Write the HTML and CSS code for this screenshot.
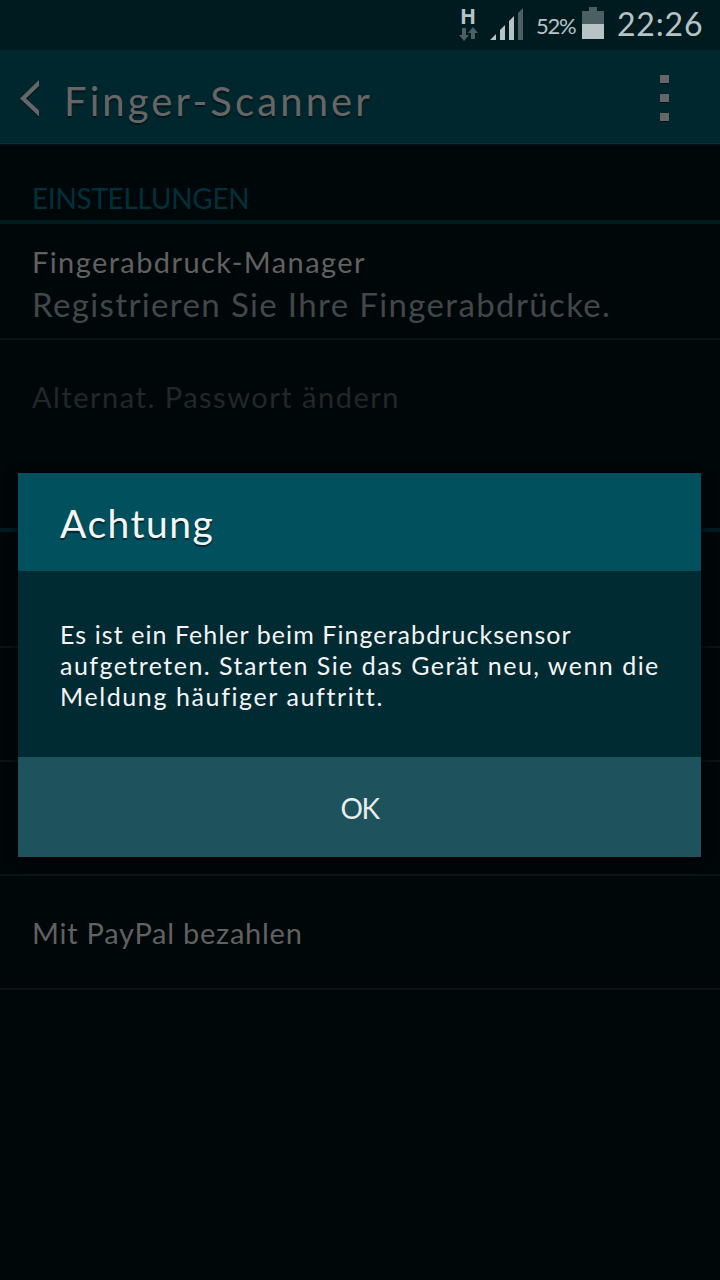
FILE: index.html
```html
<!DOCTYPE html>
<html lang="de">
<head>
<meta charset="utf-8">
<title>Finger-Scanner</title>
<link rel="stylesheet" href="styles.css">
</head>
<body>
<div class="screen">
  <div class="statusbar">
    <div class="network">
      <span class="network-type">H</span>
      <svg class="arrows" width="19" height="14" viewBox="0 0 19 14"><path d="M3 1h4v7h3l-5 6-5-6h3zM12 12V6H9l5-6 5 6h-3v6z" fill="#4c5f63"/></svg>
    </div>
    <svg class="signal" width="34" height="32" viewBox="0 0 34 32"><path d="M0 32l6-6v6zM10 32V22l5-5v15zM19 32V13l5-5v24z" fill="#b8c3c6"/><path d="M28 32V5l5-5v32z" fill="#4c5f63"/></svg>
    <span class="percent">52%</span>
    <svg class="battery" width="22" height="32" viewBox="0 0 22 32"><path d="M7 0h8v4h7v13H0V4h7z" fill="#4c5f63"/><path d="M0 17h22v15H0z" fill="#b8c3c6"/></svg>
    <span class="clock">22:26</span>
  </div>
  <header class="appbar">
    <svg class="back" width="22" height="39" viewBox="0 0 22 39"><path d="M20 2v6L7 20l13 12v6L1 20z" fill="#00181c"/><path d="M20 0v6L7 18.500l13 12v6L1 18.500z" fill="#666"/></svg>
    <h1 class="title">Finger-Scanner</h1>
    <div class="menu"><i class="dot"></i><i class="dot"></i><i class="dot"></i></div>
  </header>
  <main class="list">
    <h2 class="section first"><span class="section-text">EINSTELLUNGEN</span></h2>
    <div class="row double">
      <div class="label manager">Fingerabdruck-Manager</div>
      <div class="summary">Registrieren Sie Ihre Fingerabdrücke.</div>
    </div>
    <div class="row disabled"><div class="label password">Alternat. Passwort ändern</div></div>
    <div class="section"></div>
    <div class="row"></div>
    <div class="row"></div>
    <div class="row"></div>
    <div class="row"><div class="label paypal">Mit PayPal bezahlen</div></div>
  </main>
  <div class="dialog">
    <h2 class="dialog-title">Achtung</h2>
    <div class="dialog-body">
      <div class="line line-a">Es ist ein Fehler beim Fingerabdrucksensor</div>
      <div class="line line-b">aufgetreten. Starten Sie das Gerät neu, wenn die</div>
      <div class="line line-c">Meldung häufiger auftritt.</div>
    </div>
    <div class="dialog-button">OK</div>
  </div>
</div>
</body>
</html>
```
FILE: styles.css
```css
* { box-sizing: border-box; }
body { margin: 0; background: #000709; font-family: "Choco cooky", Lato, sans-serif; }
h1, h2 { margin: 0; font-weight: 400; }
svg { display: block; flex: none; }
.screen { position: relative; width: 720px; height: 1280px; overflow: hidden; background: #000709; white-space: nowrap; }

.statusbar { display: flex; justify-content: flex-end; height: 50px; padding: 8px 16px 0 0; background: #001b20; color: #b8c3c6; }
.network { width: 19px; margin-right: 12px; }
.network-type { display: block; height: 19px; padding-left: 1px; font: 700 21px/17px "Open Sans", sans-serif; }
.signal { margin-right: 12px; }
.percent { width: 40px; margin-right: 6px; font-size: 22px; line-height: 36px; letter-spacing: -1.2px; }
.battery { margin: -1px 13px 0 0; }
.clock { width: 87px; font-size: 32px; line-height: 32px; letter-spacing: 0.8px; }

.appbar { display: flex; height: 94px; padding-left: 19px; background: #00272e; border-bottom: 1px solid #0c2f35; color: #666; }
.back { margin-top: 30px; }
.title { flex: 1; padding-left: 23px; font-size: 40px; line-height: 103px; letter-spacing: 3.1px; text-shadow: 0 2px 1px #00161a; }
.menu { display: flex; flex-direction: column; gap: 11px; width: 60px; padding-top: 25px; }
.dot { width: 9px; height: 8px; background: #666; box-shadow: 0 1px #00161a; }

.list { color: #616161; }
.section { height: 78px; padding-left: 32px; border-bottom: 4px solid #001b20; }
.section.first { height: 80px; color: #003039; border-top: 2px solid #000e11; }
.section-text { font-size: 28px; line-height: 104px; letter-spacing: -0.3px; }
.row { height: 114px; padding: 1px 0 0 32px; border-bottom: 2px solid #0a1316; line-height: 112px; }
.section + .row { height: 116px; }
.row.disabled { border-bottom: 0; color: #222728; }
.label { font-size: 29px; }
.row.double { padding-top: 19px; }
.manager { line-height: 38px; letter-spacing: 1.4px; }
.summary { font-size: 33px; line-height: 46px; letter-spacing: 1.36px; color: #42484a; }
.password { letter-spacing: 1.5px; }
.paypal { letter-spacing: 0.75px; }

.dialog { position: absolute; left: 18px; top: 473px; width: 683px; box-shadow: 0 2px 10px 0 #000203; color: #f5f5f5; }
.dialog-title { height: 98px; padding-left: 42px; background: #00505e; font-size: 39px; line-height: 101px; letter-spacing: 1.5px; text-shadow: 0 2px 1px #00252c; }
.dialog-body { height: 186px; padding: 48px 0 0 42px; background: #002b33; font-size: 25px; line-height: 31px; }
.line-a { letter-spacing: 1.07px; }
.line-b { letter-spacing: 1.47px; }
.line-c { letter-spacing: 1.6px; }
.dialog-button { height: 100px; background: #1e525c; color: #e8eded; font-size: 28px; line-height: 102px; letter-spacing: -1.5px; text-align: center; }
```
